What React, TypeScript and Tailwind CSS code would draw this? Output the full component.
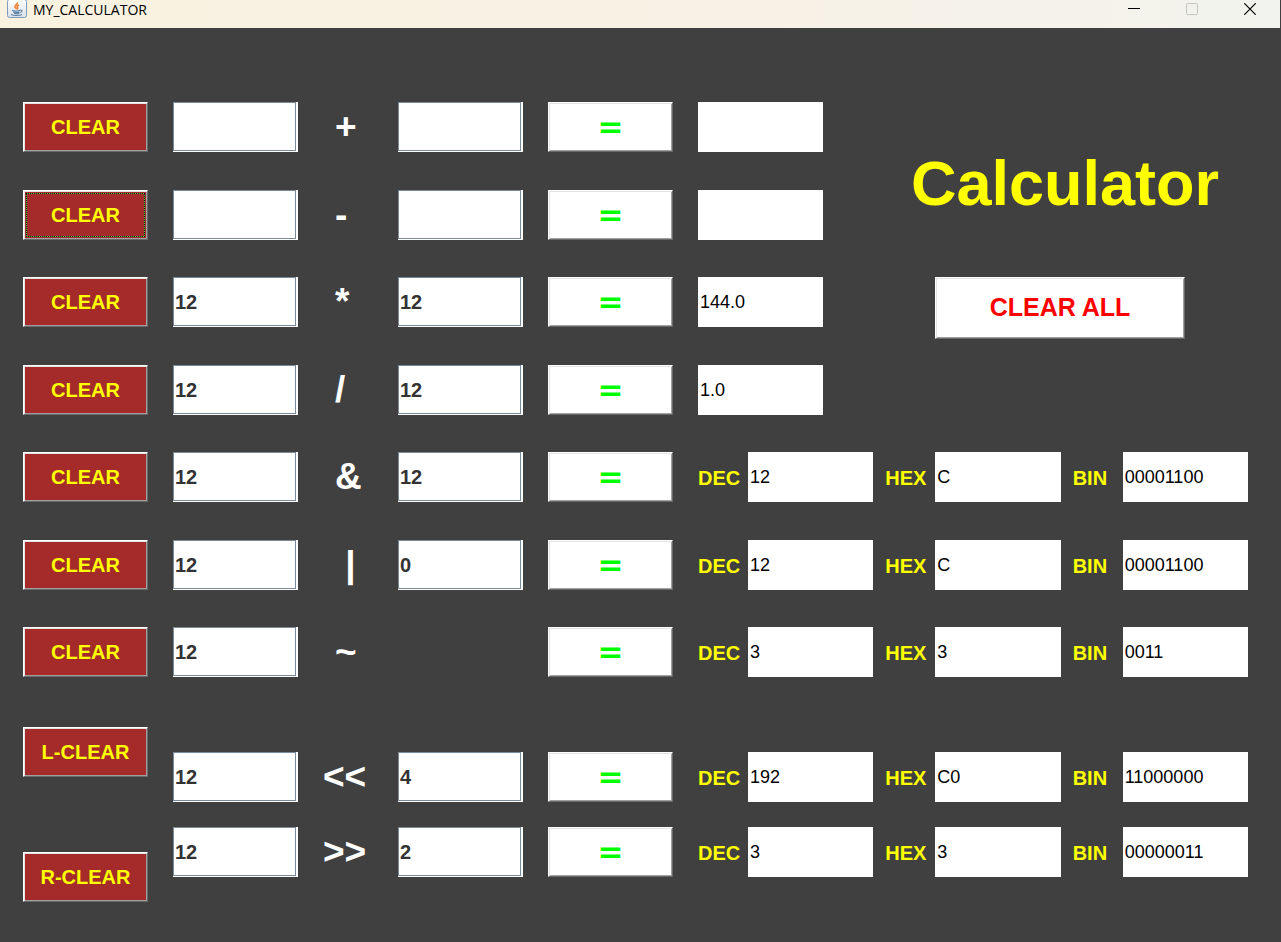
import React from "react";

type Op = { name: string; symbol: string; a: string; b: string | null };
type BasicOp = Op & { result: string };
type BitOp = Op & { dec: string; hex: string; bin: string };

const basicOps: BasicOp[] = [
  { name: "Add", symbol: "+", a: "", b: "", result: "" },
  { name: "Subtract", symbol: "-", a: "", b: "", result: "" },
  { name: "Multiply", symbol: "*", a: "12", b: "12", result: "144.0" },
  { name: "Divide", symbol: "/", a: "12", b: "12", result: "1.0" },
];

const bitOps: BitOp[] = [
  { name: "And", symbol: "&", a: "12", b: "12", dec: "12", hex: "C", bin: "00001100" },
  { name: "Or", symbol: " |", a: "12", b: "0", dec: "12", hex: "C", bin: "00001100" },
  { name: "Not", symbol: "~", a: "12", b: null, dec: "3", hex: "3", bin: "0011" },
];

const shiftOps: BitOp[] = [
  { name: "Left shift", symbol: "<<", a: "12", b: "4", dec: "192", hex: "C0", bin: "11000000" },
  { name: "Right shift", symbol: ">>", a: "12", b: "2", dec: "3", hex: "3", bin: "00000011" },
];

const bevel =
  "border border-t-white border-l-white border-r-[#696969] border-b-[#696969] shadow-[inset_1px_1px_#e3e3e3,inset_-1px_-1px_#a0a0a0]";

function ClearButton({ label = "CLEAR", name, focused = false }: { label?: string; name: string; focused?: boolean }) {
  return (
    <button
      type="button"
      aria-label={`${label} ${name}`}
      className={`h-[50px] w-full bg-[#a52a2a] p-[2px] text-[20px] font-bold text-[#ffff00] ${bevel}`}
    >
      <span
        className={`flex size-full items-center justify-center ${
          focused
            ? "border border-dotted border-black [background:linear-gradient(#a52a2a,#a52a2a)_padding-box,linear-gradient(#5ad53c,#5ad53c)_border-box]"
            : ""
        }`}
      >
        {label}
      </span>
    </button>
  );
}

function Operand({ label, value }: { label: string; value: string }) {
  return (
    <div className="h-[50px] bg-white pr-[2px] pb-px">
      <input
        aria-label={label}
        defaultValue={value}
        className="size-full border border-[#7a8a99] bg-white px-px pt-[2px] text-[20px] font-bold text-[#333333] outline-none"
      />
    </div>
  );
}

function Symbol({ text, wide = false }: { text: string; wide?: boolean }) {
  return (
    <span className={`flex h-[50px] items-center text-[37px] leading-[50px] font-bold whitespace-pre text-white ${wide ? "" : "pl-3"}`}>
      {text}
    </span>
  );
}

function EqualsButton({ name }: { name: string }) {
  return (
    <button
      type="button"
      aria-label={`Calculate ${name}`}
      className={`h-[50px] w-full bg-white pb-[2px] font-['DejaVu_Sans',sans-serif] text-[31px] leading-[46px] font-bold text-[#00ff00] ${bevel}`}
    >
      =
    </button>
  );
}

function Result({ label, value }: { label: string; value: string }) {
  return (
    <input
      readOnly
      aria-label={label}
      value={value}
      className="h-[50px] w-full min-w-0 bg-white px-[2px] text-[18px] text-black outline-none"
    />
  );
}

function BitResults({ op }: { op: BitOp }) {
  const items = [
    ["DEC", op.dec],
    ["HEX", op.hex],
    ["BIN", op.bin],
  ];
  return (
    <div className="grid grid-cols-3 gap-3">
      {items.map(([base, value]) => (
        <label key={base} className="flex items-center text-[20px] font-bold text-[#ffff00]">
          <span className="w-[50px] shrink-0 pt-[2px]">{base}</span>
          <input
            readOnly
            value={value}
            className="h-[50px] min-w-0 flex-1 bg-white px-[2px] text-[18px] font-normal text-black outline-none"
          />
        </label>
      ))}
    </div>
  );
}

function JavaIcon() {
  return (
    <svg viewBox="0 1 20 20" className="size-5" aria-hidden="true">
      <defs>
        <linearGradient id="tile" x1="0" y1="0" x2="0" y2="1">
          <stop offset="0" stopColor="#ffffff" />
          <stop offset="1" stopColor="#d9e0e8" />
        </linearGradient>
      </defs>
      <rect x="0.5" y="0.5" width="19" height="18" rx="2" fill="url(#tile)" stroke="#7f9dbb" />
      <path d="M10 3.500c1.200 1.800-2.500 2.800-2 4.500.3.900 1.500 1.300 1.500 2.300M12 6c-2 .8-2.200 1.600-1.500 2.500.5.700.2 1.300-.4 1.900" fill="none" stroke="#ee8434" strokeWidth="1.700" />
      <path d="M5 11.300c2 .9 6 .9 8.300 0M6.200 13c2 .7 4.500.7 6.300 0M7 14.300c1.600.6 3.800.6 5.300 0M13.300 11.200c2.400-.5 2.300 1.800-.4 2.300M4 15.500c2.500 1.300 8.500 1.300 11 0" fill="none" stroke="#5f86ab" strokeWidth="1.100" />
    </svg>
  );
}

function TitleBar() {
  return (
    <header className="flex h-7 items-start border-r border-[#404040] bg-linear-to-r from-[#f9f2e0] via-[#f9f1e4] to-[#f2f3ee] pr-px pl-[7px]">
      <JavaIcon />
      <span className="ml-[6px] font-['Open_Sans',sans-serif] text-[14px] leading-[20px] text-black">MY_CALCULATOR</span>
      <div className="ml-auto flex">
        <button type="button" aria-label="Minimize" className="flex h-[18px] w-[58px] items-center justify-center">
          <svg viewBox="0 0 12 12" className="size-3" aria-hidden="true">
            <path d="M0 5.500h12" stroke="#000" />
          </svg>
        </button>
        <button type="button" aria-label="Maximize" disabled className="flex h-[18px] w-[58px] items-center justify-center">
          <svg viewBox="0 0 12 12" className="size-3" aria-hidden="true">
            <rect x="0.5" y="0.5" width="11" height="11" rx="1" fill="none" stroke="#c3c3bf" />
          </svg>
        </button>
        <button type="button" aria-label="Close" className="flex h-[18px] w-[58px] items-center justify-center">
          <svg viewBox="0 0 12 12" className="size-3" aria-hidden="true">
            <path d="M0.300 0.300l11.400 11.400M11.700 0.300L0.300 11.700" stroke="#000" strokeWidth="1.200" />
          </svg>
        </button>
      </div>
    </header>
  );
}

export default function App() {
  return (
    <div className="flex min-h-screen flex-col bg-[#404040] font-['Liberation_Sans',Arial,sans-serif]">
      <TitleBar />
      <main className="flex-1 pt-[74px] pr-[33px] pb-10 pl-[23px]">
        <section className="grid grid-cols-[800fr_425fr]">
          <div>
            {basicOps.map((op, i) => (
              <div key={op.name} className="grid grid-cols-[5fr_5fr_2fr_5fr_5fr_5fr] gap-x-[25px] odd:mb-[38px] even:mb-[37px]">
                <ClearButton name={op.name} focused={i === 1} />
                <Operand label={`${op.name} first value`} value={op.a} />
                <Symbol text={op.symbol} />
                <Operand label={`${op.name} second value`} value={op.b ?? ""} />
                <EqualsButton name={op.name} />
                <Result label={`${op.name} result`} value={op.result} />
              </div>
            ))}
          </div>
          <div className="flex flex-col items-start pt-[45px] pl-[88px]">
            <h1 className="text-[63px] leading-[72px] font-bold text-[#ffff00]">Calculator</h1>
            <button type="button" className={`mt-[58px] ml-6 h-[62px] w-[250px] bg-white text-[25px] font-bold text-[#ff0000] ${bevel}`}>
              CLEAR ALL
            </button>
          </div>
        </section>

        <section>
          {bitOps.map((op) => (
            <div key={op.name} className="grid grid-cols-[650fr_550fr] gap-x-[25px] odd:mb-[38px] even:mb-[37px] last:mb-0">
              <div className="grid grid-cols-[5fr_5fr_2fr_5fr_5fr] gap-x-[25px]">
                <ClearButton name={op.name} />
                <Operand label={`${op.name} first value`} value={op.a} />
                <Symbol text={op.symbol} />
                {op.b === null ? <span /> : <Operand label={`${op.name} second value`} value={op.b} />}
                <EqualsButton name={op.name} />
              </div>
              <BitResults op={op} />
            </div>
          ))}
        </section>

        <section className="mt-[50px] grid grid-cols-[125fr_1075fr] gap-x-[25px]">
          <div className="flex flex-col gap-[75px]">
            <ClearButton label="L-CLEAR" name="Left shift" />
            <ClearButton label="R-CLEAR" name="Right shift" />
          </div>
          <div className="flex flex-col gap-[25px] pt-[25px]">
            {shiftOps.map((op) => (
              <div key={op.name} className="grid grid-cols-[500fr_550fr] gap-x-[25px]">
                <div className="grid grid-cols-[5fr_2fr_5fr_5fr] gap-x-[25px]">
                  <Operand label={`${op.name} value`} value={op.a} />
                  <Symbol text={op.symbol} wide />
                  <Operand label={`${op.name} amount`} value={op.b ?? ""} />
                  <EqualsButton name={op.name} />
                </div>
                <BitResults op={op} />
              </div>
            ))}
          </div>
        </section>
      </main>
    </div>
  );
}
